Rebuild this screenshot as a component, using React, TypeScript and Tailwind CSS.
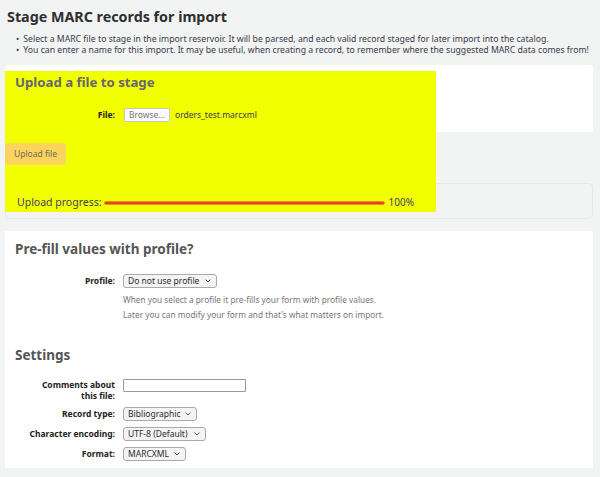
import React from "react";

const font = { fontFamily: '"Noto Sans", "Open Sans", sans-serif' };

function Select({ label, width }: { label: string; width: string }) {
  return (
    <div
      className={`flex items-center justify-between h-[14px] ${width} border border-[#a9a9a9] rounded-[3px] bg-[#f4f4f4] pl-[4px] pr-[5px] text-[8.5px] text-[#2b2b2b] leading-none`}
    >
      <span>{label}</span>
      <svg width="6" height="4" viewBox="0 0 6 4" className="ml-[4px]">
        <path d="M0.6 0.6 L3 3 L5.4 0.6" fill="none" stroke="#444" strokeWidth="0.9" />
      </svg>
    </div>
  );
}

export default function App() {
  return (
    <div className="w-[600px] h-[477px] bg-[#f2f3f3] overflow-hidden text-[#333]" style={font}>
      <h1 className="pl-[7px] pt-[7px] text-[14.3px] leading-[20px] font-bold text-[#2f2f2f]">
        Stage MARC records for import
      </h1>
      <ul className="mt-[7px] pl-[16px] text-[8.7px] leading-[11px] text-[#3a3a4a]">
        <li className="flex gap-[4px]">
          <span>•</span>
          <span>
            Select a MARC file to stage in the import reservoir. It will be parsed, and each valid record staged for later
            import into the catalog.
          </span>
        </li>
        <li className="flex gap-[4px]">
          <span>•</span>
          <span>
            You can enter a name for this import. It may be useful, when creating a record, to remember where the
            suggested MARC data comes from!
          </span>
        </li>
      </ul>

      <div className="relative mt-[9px] ml-[5px] w-[588px]">
        <div className="h-[67px] bg-white rounded-[2px]" />
        <div className="mt-[51px] h-[36px] border border-[#e6e7e7] rounded-[4px] bg-[#f2f3f3]" />

        <div className="absolute top-[6px] left-0 w-[431px] h-[141px] bg-[#f2ff00]">
          <h2 className="pl-[10px] pt-[3px] text-[13.2px] leading-[16px] font-bold text-[#666672]">
            Upload a file to stage
          </h2>
          <div className="mt-[18px] flex items-center h-[14px]">
            <span className="w-[110px] pr-[0px] text-right text-[8.5px] font-bold text-[#222]">File:</span>
            <span className="ml-[9px] h-[14px] w-[46px] border border-[#c8c8c8] rounded-[2px] bg-[#fbfbfb] text-[8.5px] leading-[12px] text-[#7a7a7a] text-center">
              Browse...
            </span>
            <span className="ml-[5px] text-[8.5px] text-[#3a3a4a]">orders_test.marcxml</span>
          </div>
          <div className="mt-[21px] w-[61px] h-[22px] bg-[#fcd45c] rounded-[3px] flex items-center justify-center text-[8.5px] text-[#6a6a6a]">
            Upload file
          </div>
          <div className="mt-[30px] flex items-center pl-[12px]">
            <span className="text-[10.5px] text-[#3d3f66]">Upload progress:</span>
            <div className="ml-[2px] w-[281px] h-[4px] rounded-[2px] bg-[#e8431f] border border-[#f08a2c]" />
            <span className="ml-[4px] text-[10px] text-[#3d3f66]">100%</span>
          </div>
        </div>
      </div>

      <div className="mt-[12px] ml-[5px] w-[588px] h-[237px] bg-white pt-[8px]">
        <h2 className="pl-[10px] text-[13.5px] leading-[20px] font-bold text-[#555]">Pre-fill values with profile?</h2>
        <div className="mt-[15px] flex items-start">
          <span className="w-[110px] text-right text-[8.5px] leading-[14px] font-bold text-[#222]">Profile:</span>
          <div className="ml-[8px]">
            <Select label="Do not use profile" width="w-[94px]" />
            <p className="mt-[4px] text-[8.3px] leading-[15px] text-[#777]">
              When you select a profile it pre-fills your form with profile values.
            </p>
            <p className="text-[8.3px] leading-[15px] text-[#777]">
              Later you can modify your form and that's what matters on import.
            </p>
          </div>
        </div>

        <h2 className="mt-[23px] pl-[10px] text-[13.5px] leading-[20px] font-bold text-[#555]">Settings</h2>
        <div className="mt-[14px] flex flex-col gap-[6px]">
          <div className="flex items-start">
            <span className="ml-[20px] w-[90px] text-right text-[8.5px] leading-[11px] font-bold text-[#222]">
              Comments about this file:
            </span>
            <div className="ml-[8px] w-[123px] h-[13px] border border-[#999] rounded-[1px] bg-white" />
          </div>
          <div className="flex items-center">
            <span className="ml-[20px] w-[90px] text-right text-[8.5px] font-bold text-[#222]">Record type:</span>
            <div className="ml-[8px]">
              <Select label="Bibliographic" width="w-[74px]" />
            </div>
          </div>
          <div className="flex items-center">
            <span className="ml-[20px] w-[90px] text-right text-[8.5px] font-bold text-[#222]">Character encoding:</span>
            <div className="ml-[8px]">
              <Select label="UTF-8 (Default)" width="w-[83px]" />
            </div>
          </div>
          <div className="flex items-center">
            <span className="ml-[20px] w-[90px] text-right text-[8.5px] font-bold text-[#222]">Format:</span>
            <div className="ml-[8px]">
              <Select label="MARCXML" width="w-[63px]" />
            </div>
          </div>
        </div>
      </div>
    </div>
  );
}
